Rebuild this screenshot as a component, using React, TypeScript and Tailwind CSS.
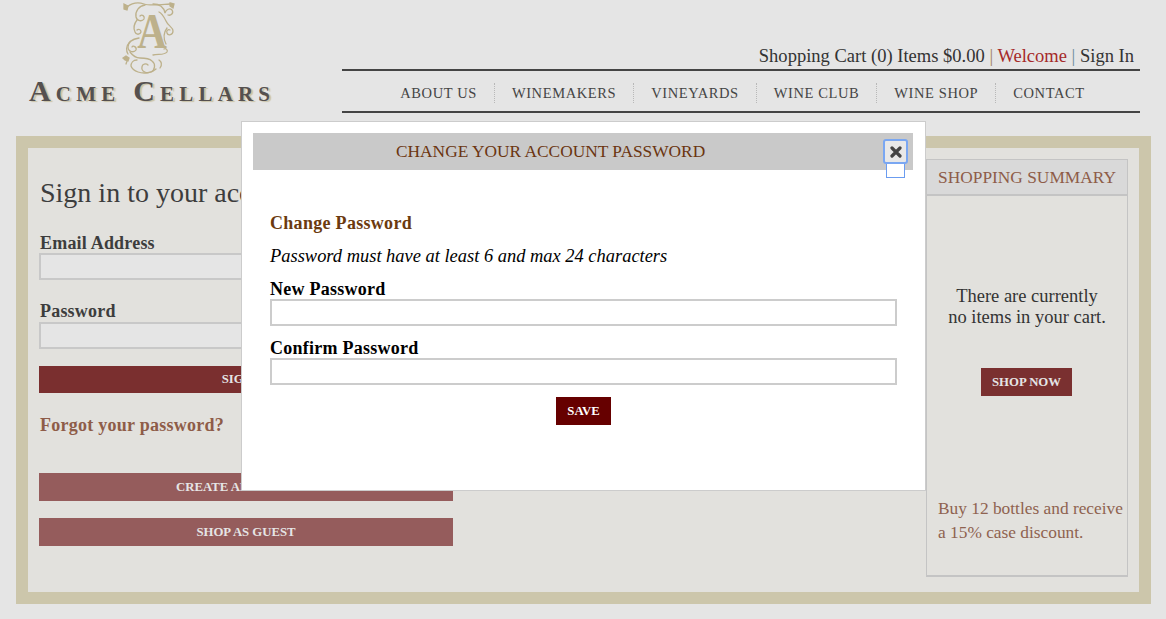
const serif = "font-['Liberation_Serif','Times_New_Roman',serif]";

const navItems = ["About Us", "Winemakers", "Vineyards", "Wine Club", "Wine Shop", "Contact"];

function Monogram() {
  return (
    <svg width="70" height="76" viewBox="0 0 70 76" className="absolute left-[115px] top-0" fill="none" stroke="#bdb18b" strokeWidth="1.3" strokeLinecap="round">
      <path d="M12 7c5-4 11-5 17-3 6 2 13 1 26 0" />
      <path d="M9 4l4 2-1 4-3-1zM55 3l4 1-1 4-3-2z" fill="#bdb18b" />
      <path d="M30 5c-6 1-10 6-9 12 1 4 6 5 8 2 1-3-2-5-4-3" />
      <path d="M38 4c7 0 11 4 12 9 1-4 5-5 7-3 2 3-1 6-4 5" />
      <path d="M44 12c3 1 5 5 7 9 2 5 7 6 7 10 0 4-5 5-6 2-1-2 1-4 3-3" />
      <path d="M22 20c-3 4-4 8-2 12 1 3 5 3 6 0 0-3-3-3-4-2" />
      <path d="M24 38c-6 1-11 4-11 9 0 5 6 6 8 3 1-3-3-5-4-3" />
      <path d="M14 43c-3 3-3 8-1 11" />
      <path d="M15 52c3 4 7 6 10 6 5 0 9 0 12 3 4 3 3 9-1 11-5 2-10-1-9-5 0-3 4-4 6-2" />
      <path d="M22 60c-4 0-6 3-6 6 1 3 4 5 7 6 6 2 14 1 18-3" />
      <path d="M38 55c6-1 12 0 14-3 1-2-1-4-3-3" />
      <path d="M44 60c3 2 3 5 1 8" />
      <path d="M11 56l3 2-1 3-3-1-2-2zM12 61l-1 3" fill="#bdb18b" />
      <path d="M52 28c-3 4-4 10-1 16" />
    </svg>
  );
}

function Field({ label, className }: { label: string; className: string }) {
  return (
    <div className={className}>
      <label className="block pl-[1px] text-[18px] leading-[20px] font-bold tracking-[0.2px] text-[#3d3d3d]">{label}</label>
      <div className="h-[27px] border-2 border-[#c8c8c8] bg-[#e5e5e5]" />
    </div>
  );
}

function ModalField({ label, className }: { label: string; className: string }) {
  return (
    <div className={className}>
      <label className="block text-[18px] leading-[20px] font-bold tracking-[0.25px] text-black">{label}</label>
      <input type="password" className="block h-[27px] w-full border-2 border-[#cccccc] bg-white" />
    </div>
  );
}

function Header() {
  return (
    <header className="flex h-[136px]">
      <div className="relative h-[136px] w-[342px] shrink-0">
        <Monogram />
        <div className="absolute left-[134px] top-[0px] scale-x-[0.82] text-[50px] leading-[62px] font-bold text-[#bdb18b]">A</div>
        <div className="absolute left-[29px] top-[73px] text-[30px] leading-[36px] whitespace-nowrap tracking-[5.2px] font-bold text-[#55504f] [font-variant:small-caps] [text-shadow:2px_1px_1px_#c9c2a6]">
          Acme Cellars
        </div>
      </div>
      <div className="w-[798px] shrink-0 pt-[44px]">
        <div className="h-[24px] pr-[6px] text-right text-[18.55px] leading-[24px] whitespace-nowrap text-[#333333]">
          Shopping Cart (0) Items $0.00 <span className="text-[#a08060]">|</span> <span className="text-[#a52a2a]">Welcome</span> <span className="text-[#6b8a99]">|</span> Sign In
        </div>
        <nav className="mt-[1px] flex h-[44px] items-center justify-center border-y-2 border-[#444444] pt-[3px] pl-[3px]">
          {navItems.map((item, i) => (
            <a
              key={item}
              className={`px-[17px] text-[14.5px] leading-[20px] tracking-[0.6px] uppercase text-[#444444] ${i < navItems.length - 1 ? "border-r border-dotted border-[#b8b8b8]" : ""}`}
            >
              {item}
            </a>
          ))}
        </nav>
      </div>
    </header>
  );
}

function SignIn() {
  return (
    <div className="w-[414px] shrink-0 pt-[28px]">
      <h2 className="pl-[1px] text-[28px] leading-[34px] whitespace-nowrap text-[#3d3d3d]">Sign in to your account</h2>
      <Field label="Email Address" className="mt-[23px]" />
      <Field label="Password" className="mt-[21px] [&>label]:mb-[1px]" />
      <button className="mt-[17px] block h-[27px] w-full bg-[#7a2f2f] text-[12.75px] font-bold text-[#e5e5e5]">SIGN IN</button>
      <div className="mt-[21px] pl-[1px] text-[18px] leading-[22px] font-bold tracking-[0.25px] text-[#8e5c48]">Forgot your password?</div>
      <button className="mt-[37px] block h-[28px] w-full bg-[#955c5c] pt-[2px] text-[12.75px] font-bold text-[#e5e5e5]">CREATE AN ACCOUNT</button>
      <button className="mt-[17px] block h-[28px] w-full bg-[#955c5c] pt-[2px] text-[12.75px] font-bold text-[#e5e5e5]">SHOP AS GUEST</button>
    </div>
  );
}

function Summary() {
  return (
    <aside className="mt-[11px] flex h-[418px] w-[202px] shrink-0 flex-col border border-b-2 border-[#c4c4c4]">
      <div className="h-[36px] shrink-0 border-b-2 border-[#c4c4c4] bg-[#d9d9d9] text-center text-[17.35px] leading-[36px] text-[#8e5c48]">
        SHOPPING SUMMARY
      </div>
      <p className="mt-[90px] text-center text-[18.5px] leading-[21px] text-[#333333]">
        There are currently
        <br />
        no items in your cart.
      </p>
      <button className="mt-[40px] ml-[54px] block h-[28px] w-[91px] bg-[#7a3030] pt-[2px] text-[12.75px] font-bold text-[#e5e5e5]">SHOP NOW</button>
      <p className="mt-[101px] pl-[11px] text-[17.35px] leading-[24px] whitespace-nowrap text-[#8f6350]">
        Buy 12 bottles and receive
        <br />a 15% case discount.
      </p>
    </aside>
  );
}

function PasswordModal() {
  return (
    <div className="absolute left-[241px] top-[121px] h-[370px] w-[685px] border border-[#cccccc] bg-white p-[11px]">
      <div className="relative h-[37px] w-[660px] bg-[#c9c9c9] pl-[143px] text-[17.35px] leading-[37px] text-[#6b3510]">
        CHANGE YOUR ACCOUNT PASSWORD
        <div className="absolute left-[633px] top-[26px] h-[19px] w-[19px] border border-t-0 border-[#6b9cf0] bg-white" />
        <button className="absolute left-[630px] top-[6px] flex h-[25px] w-[25px] items-center justify-center rounded-[3px] border-2 border-[#7aa7f2] bg-[#e8e8e8]">
          <svg width="12" height="12" viewBox="0 0 12 12" stroke="#444444" strokeWidth="3.2" strokeLinecap="round">
            <path d="M2 2l8 8M10 2l-8 8" />
          </svg>
        </button>
      </div>
      <div className="pl-[17px] pr-[17px]">
        <h3 className="mt-[42px] text-[18px] leading-[22px] font-bold tracking-[0.3px] text-[#6b3a0f]">Change Password</h3>
        <p className="mt-[11px] text-[18.45px] leading-[22px] italic text-black">Password must have at least 6 and max 24 characters</p>
        <ModalField label="New Password" className="mt-[12px]" />
        <ModalField label="Confirm Password" className="mt-[12px]" />
        <button className="mx-auto mt-[12px] block h-[28px] w-[55px] bg-[#660000] pt-[2px] text-[12.75px] font-bold text-white">SAVE</button>
      </div>
    </div>
  );
}

export default function App() {
  return (
    <div className={`relative h-[619px] overflow-hidden bg-[#e5e5e5] ${serif}`}>
      <Header />
      <main className="mx-[16px] flex h-[468px] w-[1135px] gap-[473px] border-[12px] border-[#ccc6ab] bg-[#e2e1dd] pl-[11px]">
        <SignIn />
        <Summary />
      </main>
      <PasswordModal />
    </div>
  );
}
